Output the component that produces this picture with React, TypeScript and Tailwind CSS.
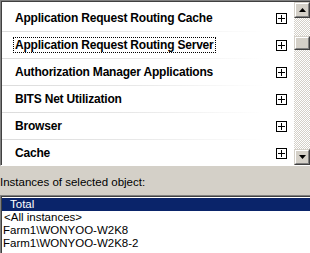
import React from "react";

const items = [
  "Application Request Routing Cache",
  "Application Request Routing Server",
  "Authorization Manager Applications",
  "BITS Net Utilization",
  "Browser",
  "Cache",
];

function PlusBox() {
  return (
    <svg width="11" height="11" viewBox="0 0 11 11" className="shrink-0">
      <rect x="0.5" y="0.5" width="10" height="10" fill="white" stroke="black" />
      <line x1="2" y1="5.5" x2="9" y2="5.5" stroke="black" />
      <line x1="5.5" y1="2" x2="5.5" y2="9" stroke="black" />
    </svg>
  );
}

function ScrollButton({ up }: { up: boolean }) {
  return (
    <div className="h-[16px] w-[16px] shrink-0 border-t border-l border-t-[#d4d0c8] border-l-[#d4d0c8] border-b border-r border-b-[#404040] border-r-[#404040]">
      <div className="h-full w-full flex items-center justify-center bg-[#d4d0c8] border-t border-l border-t-white border-l-white border-b border-r border-b-[#808080] border-r-[#808080]">
        <svg width="7" height="4" viewBox="0 0 7 4">
          {up ? (
            <polygon points="3.5,0 7,4 0,4" fill="black" />
          ) : (
            <polygon points="0,0 7,0 3.5,4" fill="black" />
          )}
        </svg>
      </div>
    </div>
  );
}

export default function App() {
  return (
    <div className="w-[310px] h-[253px] bg-[#d4d0c8] flex flex-col overflow-hidden font-['Liberation_Sans',Arial,sans-serif]">
      <div className="h-[166px] shrink-0 flex flex-col border-t border-l border-[#808080] border-b border-b-white">
        <div className="flex-1 min-h-0 flex border-t border-l border-[#404040]">
          <div className="flex-1 bg-white overflow-hidden pt-[3px]">
            {items.map((t, i) => (
              <div key={t} className="flex flex-col">
                <div className="h-[26px] flex items-center justify-between pl-[12px] pr-[7px]">
                  <span
                    className={
                      "text-[12px] tracking-[-0.2px] font-bold text-black leading-[14px] px-[1px] " +
                      (i === 1 ? "outline outline-1 outline-dotted outline-black" : "")
                    }
                  >
                    {t}
                  </span>
                  <PlusBox />
                </div>
                <div className="h-px mr-[30px] bg-linear-to-r from-[#dcdcdc] via-[#e8e8e8] to-white" />
              </div>
            ))}
          </div>
          <div className="w-[16px] flex flex-col">
            <ScrollButton up />
            <div className="flex-1 flex flex-col bg-[repeating-conic-gradient(#d4d0c8_0_25%,#ffffff_0_50%)] bg-[length:2px_2px]">
              <div className="h-[18px]" />
              <div className="h-[14px] w-[16px] border-t border-l border-t-[#d4d0c8] border-l-[#d4d0c8] border-b border-r border-b-[#404040] border-r-[#404040]">
                <div className="h-full w-full bg-[#d4d0c8] border-t border-l border-t-white border-l-white border-b border-r border-b-[#808080] border-r-[#808080]" />
              </div>
            </div>
            <ScrollButton up={false} />
          </div>
        </div>
      </div>
      <div className="h-[29px] shrink-0 flex items-center pt-[2px] text-[11.5px] text-black leading-[14px]">
        Instances of selected object:
      </div>
      <div className="flex-1 bg-white border-t border-l border-[#808080]">
        <div className="h-full border-t border-l border-[#404040] pt-[1px] text-[11.5px] leading-[13px] text-black">
          <div className="h-[13px] bg-[#0a246a] text-white pl-[8px] flex items-center">Total</div>
          <div className="h-[13px] pl-[2px] flex items-center">&lt;All instances&gt;</div>
          <div className="h-[13px] pl-[1px] flex items-center">Farm1\WONYOO-W2K8</div>
          <div className="h-[13px] pl-[1px] flex items-center">Farm1\WONYOO-W2K8-2</div>
        </div>
      </div>
    </div>
  );
}
